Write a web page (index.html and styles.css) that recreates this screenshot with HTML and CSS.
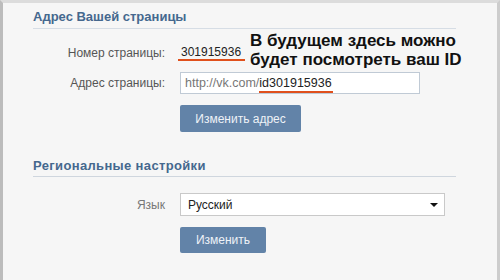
FILE: index.html
```html
<!DOCTYPE html>
<html lang="ru">
<head>
<meta charset="utf-8">
<link rel="stylesheet" href="styles.css">
</head>
<body>
<div class="frame">
  <section class="section first">
    <h2 class="section-title">Адрес Вашей страницы</h2>
    <div class="form">
      <div class="row row-number">
        <span class="label">Номер страницы:</span>
        <span class="value"><span class="mark-number">301915936</span></span>
      </div>
      <div class="row row-address">
        <span class="label">Адрес страницы:</span>
        <span class="input"><span class="prefix">http://vk.com/</span><span class="mark-id">id301915936</span></span>
      </div>
      <div class="row row-button">
        <span class="label"></span>
        <button class="btn btn-wide">Изменить адрес</button>
      </div>
    </div>
    <div class="callout">В будущем здесь можно<br>будет посмотреть ваш ID</div>
  </section>
  <section class="section second">
    <h2 class="section-title">Региональные настройки</h2>
    <div class="form">
      <div class="row row-lang">
        <span class="label label-light">Язык</span>
        <span class="select"><span>Русский</span><span class="caret"></span></span>
      </div>
      <div class="row row-button2">
        <span class="label"></span>
        <button class="btn btn-small">Изменить</button>
      </div>
    </div>
  </section>
</div>
</body>
</html>
```
FILE: styles.css
```css
* { box-sizing: border-box; }
html, body { margin: 0; padding: 0; }
body {
  width: 500px;
  height: 280px;
  overflow: hidden;
  background: #f6f6f6;
  font-family: "Liberation Sans", Arial, sans-serif;
  font-size: 12px;
  color: #333;
}
.frame {
  height: 280px;
  border-left: 3px solid #bcbcbc;
  border-top: 3px solid #dcdcdc;
  border-right: 3px solid #cdcdcd;
  background: #f6f6f6;
}
.section {
  position: relative;
  margin-left: 30px;
  width: 423px;
}
.section-title {
  margin: 0;
  font-size: 13px;
  font-weight: bold;
  color: #45688e;
  padding: 6px 0 3px 0;
  line-height: 16px;
  border-bottom: 1px solid #d6dde5;
}
.second { margin-top: 26px; }
.second .section-title {
  padding-top: 0;
  padding-bottom: 2px;
  letter-spacing: 0.35px;
  border-bottom-color: #cfd6de;
}
.form { display: flex; flex-direction: column; }
.row {
  display: flex;
  align-items: center;
  gap: 15px;
}
.label {
  width: 132px;
  text-align: right;
  color: #555;
  flex: none;
}
.label-light { color: #777; }
.row-number { margin-top: 16px; height: 16px; }
.value { color: #222; }
.mark-number {
  display: inline-block;
  margin-left: -2px;
  padding: 0 0 0 3px;
  width: 67px;
  line-height: 14px;
  border-bottom: 2px solid #e0501c;
}
.row-address { margin-top: 11px; }
.input {
  width: 240px;
  height: 22px;
  background: #fff;
  border: 1px solid #c0cad5;
  padding: 0 4px;
  line-height: 20px;
  font-size: 12.5px;
  white-space: nowrap;
}
.prefix { color: #777; }
.mark-id {
  color: #222;
  border-bottom: 2px solid #e0501c;
  padding-bottom: 1px;
  padding-right: 1px;
}
.row-button { margin-top: 11px; }
.btn {
  font-family: inherit;
  font-size: 12px;
  color: #eef2f7;
  background: #6283a8;
  border: none;
  border-radius: 2px;
  height: 27px;
  padding: 0;
  cursor: pointer;
}
.btn-wide { width: 121px; }
.btn-small { width: 86px; height: 26px; }
.callout {
  position: absolute;
  left: 217px;
  top: 28px;
  font-size: 17px;
  font-weight: bold;
  line-height: 19px;
  color: #111;
  white-space: nowrap;
}
.row-lang { margin-top: 16px; }
.select {
  width: 265px;
  height: 23px;
  background: #fff;
  border: 1px solid #c9c9c9;
  display: flex;
  align-items: center;
  justify-content: space-between;
  padding: 0 6px 0 7px;
  color: #222;
}
.caret {
  width: 0;
  height: 0;
  border-left: 4px solid transparent;
  border-right: 4px solid transparent;
  border-top: 4px solid #111;
}
.row-button2 { margin-top: 11px; }
```
